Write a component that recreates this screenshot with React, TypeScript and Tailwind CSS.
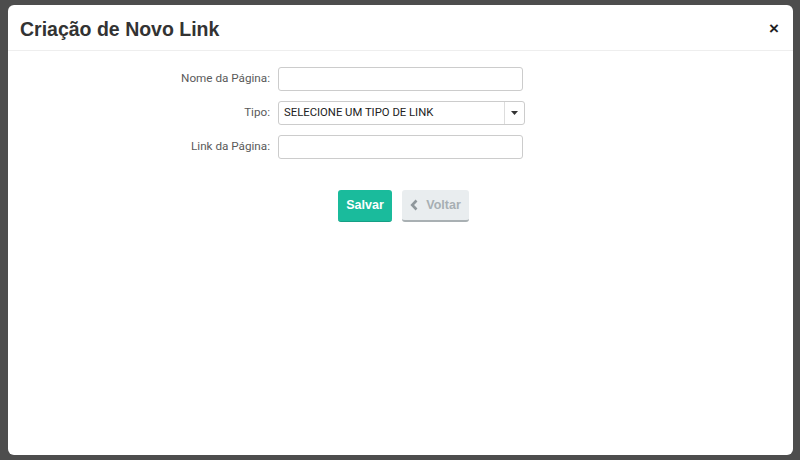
import React from 'react';

const Field: React.FC<{ label: string; children: React.ReactNode }> = ({ label, children }) => (
  <div className="flex items-center">
    <label className="w-[270px] pr-[8px] text-right text-[11.7px] text-[#5a5a5a] font-['Roboto',sans-serif]">
      {label}
    </label>
    {children}
  </div>
);

export default function App() {
  return (
    <div className="w-[800px] h-[460px] bg-[#4d4d4d] pt-[5px] pb-[5px] pl-[8px] pr-[7px] font-['Liberation_Sans',Arial,sans-serif]">
      <div className="h-[450px] bg-white rounded-[6px] flex flex-col">
        {/* Header */}
        <div className="h-[46px] flex items-center justify-between pl-[12px] pr-[14px] border-b border-[#eeeeee]">
          <h4 className="text-[19.5px] font-bold text-[#333333] pt-[4px]">Criação de Novo Link</h4>
          <button className="text-[17px] font-bold text-[#222] leading-none pt-[2px]">×</button>
        </div>

        {/* Body */}
        <div className="pt-[16px] pr-[10px]">
          <div className="flex flex-col gap-[10px]">
            <Field label="Nome da Página:">
              <input className="w-[245px] h-[24px] border border-[#cccccc] rounded-[3px] bg-white outline-none" />
            </Field>
            <Field label="Tipo:">
              <div className="w-[247px] h-[24px] border border-[#cccccc] rounded-[3px] flex items-center">
                <span className="flex-1 pl-[5px] text-[11.3px] text-[#222] font-['Roboto',sans-serif]">SELECIONE UM TIPO DE LINK</span>
                <span className="w-[20px] h-full border-l border-[#dddddd] flex items-center justify-center">
                  <svg width="7" height="4" viewBox="0 0 7 4">
                    <path d="M0 0 H7 L3.5 4 Z" fill="#333" />
                  </svg>
                </span>
              </div>
            </Field>
            <Field label="Link da Página:">
              <input className="w-[245px] h-[24px] border border-[#cccccc] rounded-[3px] bg-white outline-none" />
            </Field>
          </div>

          <div className="flex justify-center gap-[10px] mt-[31px] pl-[16px]">
            <button className="w-[54px] h-[32px] rounded-[3px] bg-[#1abb9c] text-white text-[12.5px] font-bold border-b border-[#169f85]">
              Salvar
            </button>
            <button className="w-[67px] h-[32px] rounded-[3px] bg-[#e9edef] text-[#a7afb3] text-[12.5px] font-bold border-b-[2px] border-[#a9b0b3] flex items-center justify-center gap-[8px]">
              <svg width="8" height="12" viewBox="0 0 8 12">
                <path d="M6.5 1.5 L2.2 6 L6.5 10.5" stroke="#8f979b" strokeWidth="2.6" fill="none" />
              </svg>
              Voltar
            </button>
          </div>
        </div>
      </div>
    </div>
  );
}
